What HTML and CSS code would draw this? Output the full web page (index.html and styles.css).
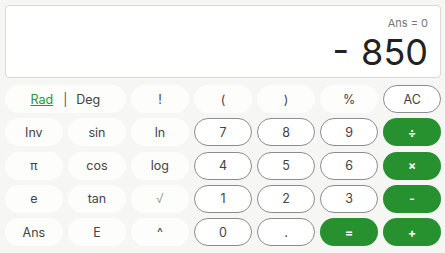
FILE: index.html
```html
<!DOCTYPE html>
<html lang="en">
<head>
    <meta charset="UTF-8">
    <meta name="viewport" content="width=device-width, initial-scale=1.0">
    <title>Calculator</title>
    <link rel="stylesheet" href="styles.css">
</head>
<body>
    <div class="calc">
        <div class="display">
            <p class="ans">Ans = 0</p>
            <p class="result">- 850</p>
        </div>
        <div class="keys">
            <div class="key fn mode"><span class="rad">Rad</span><span class="sep">|</span><span>Deg</span></div>
            <button class="key fn">!</button>
            <button class="key fn">(</button>
            <button class="key fn">)</button>
            <button class="key fn">%</button>
            <button class="key num">AC</button>

            <button class="key fn">Inv</button>
            <button class="key fn">sin</button>
            <button class="key fn">ln</button>
            <button class="key num">7</button>
            <button class="key num">8</button>
            <button class="key num">9</button>
            <button class="key op">÷</button>

            <button class="key fn">π</button>
            <button class="key fn">cos</button>
            <button class="key fn">log</button>
            <button class="key num">4</button>
            <button class="key num">5</button>
            <button class="key num">6</button>
            <button class="key op">×</button>

            <button class="key fn">e</button>
            <button class="key fn">tan</button>
            <button class="key fn sqrt">√</button>
            <button class="key num">1</button>
            <button class="key num">2</button>
            <button class="key num">3</button>
            <button class="key op">-</button>

            <button class="key fn">Ans</button>
            <button class="key fn">E</button>
            <button class="key fn">^</button>
            <button class="key num">0</button>
            <button class="key num">.</button>
            <button class="key op">=</button>
            <button class="key op">+</button>
        </div>
    </div>
</body>
</html>
```
FILE: styles.css
```css
* {
    margin: 0;
    padding: 0;
    box-sizing: border-box;
}

body {
    font-family: Inter, 'Liberation Sans', sans-serif;
    background: #f6f6f4;
    color: #444;
}

.calc {
    padding: 5px 4px 5px 5px;
}

.display {
    height: 73px;
    background: #fff;
    border: 1px solid #d8d8d6;
    border-radius: 4px;
    padding: 10px 12px 0 0;
    text-align: right;
}

.ans {
    font-size: 11px;
    color: #777;
    line-height: 14px;
}

.result {
    font-size: 36px;
    color: #222;
    line-height: 44px;
    word-spacing: 2px;
}

.keys {
    margin-top: 7px;
    display: grid;
    grid-template-columns: repeat(7, 1fr);
    grid-auto-rows: 28px;
    gap: 5.3px;
}

.key {
    font-family: inherit;
    font-size: 12.5px;
    color: #444;
    border-radius: 14px;
    border: none;
    display: flex;
    align-items: center;
    justify-content: center;
}

.fn {
    background: #fdfdfc;
}

.sqrt {
    color: #999;
    font-weight: 300;
}

.num {
    background: #fff;
    border: 1px solid #8c8c8c;
}

.op {
    background: #27902f;
    color: #fff;
    font-weight: bold;
    font-size: 12px;
}

.mode {
    grid-column: span 2;
}

.rad {
    color: #2b9531;
    text-decoration: underline;
}

.sep {
    margin: 0 9px 0 10px;
    color: #555;
}
```
